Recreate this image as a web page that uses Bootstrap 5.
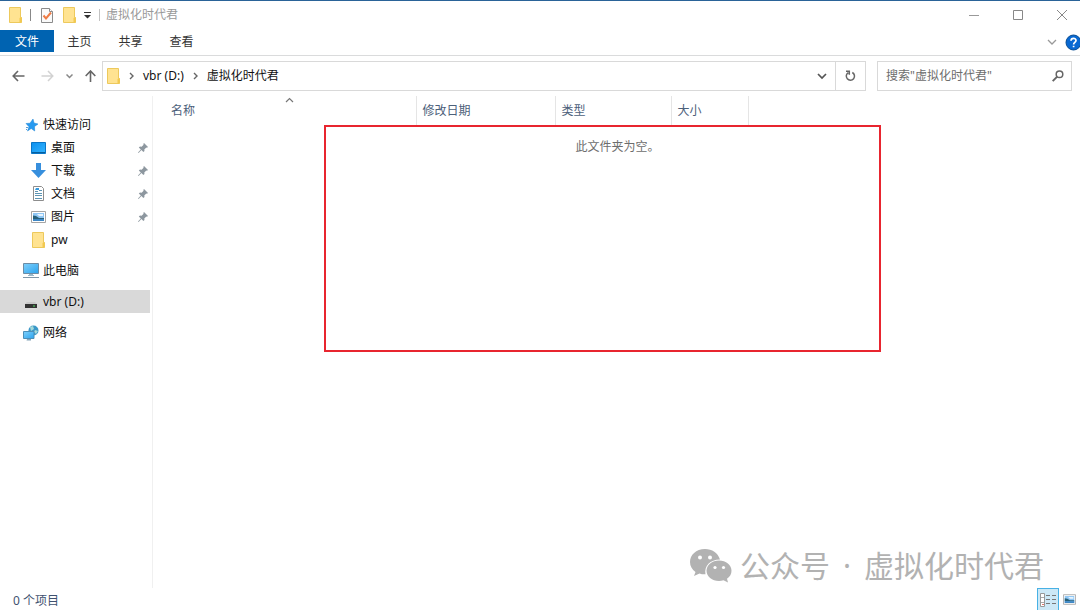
<!DOCTYPE html>
<html lang="zh-CN">
<head>
<meta charset="utf-8">
<meta name="viewport" content="width=device-width, initial-scale=1">
<title>虚拟化时代君</title>
<link href="https://cdn.jsdelivr.net/npm/bootstrap@5.3.0/dist/css/bootstrap.min.css" rel="stylesheet">
<style>
body{font-family:"Noto Sans","Noto Sans CJK SC",sans-serif;font-size:12px;line-height:20px;color:#111;background:#fff}
svg{display:block;flex:none}
button{border:0;background:none;padding:0;color:inherit}
.explorer{border-top:1px solid #2a6398;overflow-x:hidden}
.titlebar{height:28px;margin-bottom:1px;padding-left:9px}
.quick-tools{gap:8px}
.quick-tools .tool-check{padding:0 2px}
.title-text{color:#999;margin-left:6px}
.tool-sep{width:1px;height:12px;background:#888}
.win-btn{width:44px;height:28px;display:flex;align-items:center;justify-content:center}
.window-buttons{margin-right:-4px}
.ribbon{height:26px;border-bottom:1px solid #dadbdc}
.ribbon .tab-btn{height:22px;width:51px;color:#333;text-align:center;text-decoration:none;line-height:24px}
.ribbon .file-tab{width:54px;background:#0063b1;color:#fff}
.addressbar{height:40px;padding:5px 8px 5px 12px}
.path-box,.search-box{height:30px;border:1px solid #d9d9d9}
.path-box{margin-left:6px;margin-right:11px}
.path-box a{color:#111;text-decoration:none}
.crumbs{gap:9px}
.refresh{width:30px;border-left:1px solid #d9d9d9}
.search-box{width:195px;padding:0 7px 0 8px}
.search-box input{border:0;outline:0;padding:0;font-size:12px;color:#666;background:none;min-width:0}
.search-box input::placeholder{color:#6d6d6d;opacity:1}
.workspace{height:calc(100vh - 118px)}
.sidebar{width:153px;border-right:1px solid #f0f0f0;padding-top:17px}
.place{height:23px;margin-right:2px;color:#111;text-decoration:none;padding-right:2px}
.place.root{padding-left:23px;gap:4px}
.place.child{padding-left:31px;gap:5px}
.place.current{background:#d9d9d9}
.group-gap{margin-top:8px}
.files{padding-left:10px}
.file-table{table-layout:fixed;width:585px;color:#4c607a}
.file-table th{height:29px;font-weight:400;padding:0 6px;border-right:1px solid #e5e5e5;vertical-align:middle;position:relative}
.file-table th:first-child{padding-left:8px}
.sort-mark{position:absolute;top:1px;left:calc(50% - 4px)}
.empty-note{color:#6d6d6d;margin:12px 8px 0 0}
.highlight{position:absolute;left:171px;right:199px;top:29px;height:227px;border:2px solid #e8252f;pointer-events:none}
.watermark{position:absolute;right:36px;bottom:2px;gap:8px;color:#b2b2b2;font-size:30px;line-height:40px}
.wm-dot{padding:0 13px}
.statusbar{height:22px;padding-left:13px;padding-right:4px;color:#3f5270}
.view-on{width:22px;height:22px;background:#cce8f6;border:1px solid #48b1e5;border-bottom:0;display:flex;align-items:center;justify-content:center}
</style>
</head>
<body>
<svg width="0" height="0" class="position-absolute" aria-hidden="true">
<defs>
<linearGradient id="blue" x1="0" y1="0" x2="1" y2="1"><stop offset="0" stop-color="#0c90ef"/><stop offset="1" stop-color="#35b5ff"/></linearGradient>
<linearGradient id="screen" x1="0" y1="0" x2="1" y2="1"><stop offset="0" stop-color="#7fd0fb"/><stop offset="1" stop-color="#2ba3ee"/></linearGradient>
<symbol id="folder" viewBox="0 0 13 16"><path d="M.5.5h11v10h1v5H.5z" fill="#ffe391" stroke="#edc95c"/><path d="M10.500 15v-4l2-1v5.500h-2z" fill="#f3c94f"/></symbol>
<symbol id="pin" viewBox="0 0 10 10"><path d="M6 0l4 4-1 .7-.7-.3-2 2 .2 1.600-1.100 1.100-2-2L.6 10 0 9.400l2.800-2.900-2-2L2 3.500l1.600.2 2-2L5.300 1z" fill="#8d979f"/></symbol>
<symbol id="photo" viewBox="0 0 15 12"><path d="M.5.5h14v11H.5z" fill="#fff" stroke="#a5a5a5"/><path d="M2 2h11v8H2z" fill="#8fc6f4"/><path d="M2 4.500l3 .5 3 2h5v1H2z" fill="#276078"/><path d="M2 8h11v2H2z" fill="#3d86c4"/><path d="M6 3h6v2H8z" fill="#e6f4ff"/></symbol>
<symbol id="right" viewBox="0 0 5 8"><path d="M1 1l3 3-3 3" fill="none" stroke="#666" stroke-width="1.400"/></symbol>
</defs>
</svg>
<div class="explorer">
<header class="titlebar d-flex align-items-center">
  <div class="quick-tools d-flex align-items-center">
    <svg width="13" height="16"><use href="#folder"/></svg>
    <span class="tool-sep"></span>
    <button class="tool-check" aria-label="属性"><svg width="12" height="15" viewBox="0 0 12 15"><path d="M.5.5h8l3 3v11H.5z" fill="#fafafa" stroke="#8b8b8b"/><path d="M8.500.5v3h3" fill="#fff" stroke="#8b8b8b"/><path d="M2.500 7.500l2.500 3 5-6" fill="none" stroke="#ee7b45" stroke-width="2"/></svg></button>
    <button aria-label="新建文件夹"><svg width="13" height="16"><use href="#folder"/></svg></button>
    <button aria-label="自定义快速访问工具栏"><svg width="7" height="7" viewBox="0 0 7 7"><path d="M0 0h7v1H0zM0 3h7L3.500 6.500z" fill="#333"/></svg></button>
    <span class="tool-sep opacity-50"></span>
  </div>
  <span class="title-text">虚拟化时代君</span>
  <div class="window-buttons d-flex ms-auto">
    <button class="win-btn" aria-label="最小化"><svg width="10" height="10" viewBox="0 0 10 10"><path d="M0 5.500h10" stroke="#999"/></svg></button>
    <button class="win-btn" aria-label="最大化"><svg width="10" height="10" viewBox="0 0 10 10"><path d="M.5.5h9v9h-9z" fill="none" stroke="#888"/></svg></button>
    <button class="win-btn" aria-label="关闭"><svg width="10" height="10" viewBox="0 0 10 10"><path d="M0 0l10 10M10 0L0 10" stroke="#888"/></svg></button>
  </div>
</header>
<nav class="ribbon d-flex align-items-start">
  <a href="#" class="tab-btn file-tab">文件</a>
  <a href="#" class="tab-btn">主页</a>
  <a href="#" class="tab-btn">共享</a>
  <a href="#" class="tab-btn">查看</a>
  <div class="d-flex align-items-center ms-auto gap-2 mt-1">
    <button aria-label="展开功能区"><svg width="10" height="7" viewBox="0 0 10 7"><path d="M1 1l4 4 4-4" fill="none" stroke="#999" stroke-width="1.300"/></svg></button>
    <button aria-label="帮助"><svg width="15" height="17" viewBox="0 0 15 17"><circle cx="8.500" cy="8.500" r="7.500" fill="#0868d2" stroke="#084c92"/><path d="M6 6.800c0-3.300 5-3.200 5-.3 0 2-2.400 1.800-2.400 4M8.600 11.700v1.600" fill="none" stroke="#fff" stroke-width="1.700"/></svg></button>
  </div>
</nav>
<div class="addressbar d-flex align-items-center">
  <button aria-label="后退"><svg width="13" height="12" viewBox="0 0 13 12"><path d="M12.500 6H1.500M6 1L1.200 6 6 11" fill="none" stroke="#666" stroke-width="1.600"/></svg></button>
  <button class="ms-3" aria-label="前进"><svg width="13" height="12" viewBox="0 0 13 12"><path d="M.5 6h11M7 1l4.800 5L7 11" fill="none" stroke="#d2d2d2" stroke-width="1.500"/></svg></button>
  <button class="ms-2 ps-1" aria-label="最近浏览的位置"><svg width="7" height="5" viewBox="0 0 7 5"><path d="M.5.5l3 3 3-3" fill="none" stroke="#888" stroke-width="1.500"/></svg></button>
  <button class="ms-2 ps-1" aria-label="上移"><svg width="11" height="12" viewBox="0 0 11 12"><path d="M5.500 12V1.500M.7 6l4.800-5 4.800 5" fill="none" stroke="#666" stroke-width="1.600"/></svg></button>
  <div class="path-box d-flex align-items-center flex-grow-1">
    <div class="crumbs d-flex align-items-center ms-1">
      <svg width="13" height="16"><use href="#folder"/></svg>
      <svg width="5" height="8"><use href="#right"/></svg>
      <a href="#">vbr (D:)</a>
      <svg width="5" height="8"><use href="#right"/></svg>
      <a href="#">虚拟化时代君</a>
    </div>
    <button class="ms-auto me-2" aria-label="历史位置"><svg width="10" height="7" viewBox="0 0 10 7"><path d="M1 1l4 4 4-4" fill="none" stroke="#555" stroke-width="1.700"/></svg></button>
    <button class="refresh h-100 d-flex align-items-center justify-content-center" aria-label="刷新"><svg width="11" height="12" viewBox="0 0 11 12"><path d="M7.300 2.500a4.100 4.100 0 1 1-4 .1M1 1.300h3.300v3.500" fill="none" stroke="#666" stroke-width="1.500"/></svg></button>
  </div>
  <div class="search-box d-flex align-items-center">
    <input class="flex-grow-1" type="search" aria-label="搜索" placeholder='搜索"虚拟化时代君"'>
    <button aria-label="开始搜索"><svg width="12" height="12" viewBox="0 0 12 12"><circle cx="7.500" cy="4.300" r="3.300" fill="none" stroke="#666" stroke-width="1.500"/><path d="M5.200 6.700L.7 11.200" stroke="#666" stroke-width="1.900"/></svg></button>
  </div>
</div>
<div class="workspace d-flex">
  <nav class="sidebar flex-shrink-0">
    <a href="#" class="place root d-flex align-items-center"><svg width="16" height="14" viewBox="0 0 16 14"><path d="M10 1l1 4 4 1-3.500 2.500.2 4.500-3.500-2.500L4.500 13 6 8.800 3 5.500l4-.3z" fill="#279af0" stroke="#1780d2" stroke-width=".5"/><path d="M3 9.500h2M3 11.500h1" stroke="#5d9bd0"/></svg>快速访问</a>
    <a href="#" class="place child d-flex align-items-center"><svg width="15" height="12" viewBox="0 0 15 12"><path d="M.5.5h14v11H.5z" fill="url(#blue)" stroke="#0b76c6"/><path d="M1 10.500h13" stroke="#075f9e"/></svg>桌面<svg class="ms-auto" width="10" height="10"><use href="#pin"/></svg></a>
    <a href="#" class="place child d-flex align-items-center"><svg width="15" height="15" viewBox="0 0 15 15"><path d="M5 0h5v7h5l-7.500 8L0 7h5z" fill="#378fdd"/></svg>下载<svg class="ms-auto" width="10" height="10"><use href="#pin"/></svg></a>
    <a href="#" class="place child d-flex align-items-center"><svg width="15" height="15" viewBox="0 0 15 15"><path d="M2.500.5h8l2 2v12h-10z" fill="#fff" stroke="#8d8d8d"/><path d="M4 5.500h3M4 7.500h7M4 9.500h7M4 12.500h7M8 4.500h3" stroke="#5d95b4"/><path d="M5 2h3v2H4z" fill="#359ade"/></svg>文档<svg class="ms-auto" width="10" height="10"><use href="#pin"/></svg></a>
    <a href="#" class="place child d-flex align-items-center"><svg width="15" height="12"><use href="#photo"/></svg>图片<svg class="ms-auto" width="10" height="10"><use href="#pin"/></svg></a>
    <a href="#" class="place child d-flex align-items-center"><svg width="15" height="16"><use href="#folder"/></svg>pw</a>
    <a href="#" class="place root group-gap d-flex align-items-center"><svg width="16" height="15" viewBox="0 0 16 15"><path d="M.5.5h15v10H.5z" fill="url(#screen)" stroke="#6c8ca5"/><path d="M6 11h4v1h1v1H5v-1h1z" fill="#9ab7c8"/><path d="M0 14.500h16" stroke="#8097a8"/></svg>此电脑</a>
    <a href="#" class="place root group-gap current d-flex align-items-center"><svg width="16" height="14" viewBox="0 0 16 14"><path d="M4 7h8l2 2H2z" fill="#c8c8c8"/><path d="M2 9h12v4H2z" fill="#333"/><path d="M10 11h2" stroke="#50df61"/></svg>vbr (D:)</a>
    <a href="#" class="place root group-gap d-flex align-items-center"><svg width="16" height="16" viewBox="0 0 16 16"><circle cx="10.500" cy="5.500" r="5" fill="#3b98c8"/><path d="M7 2l3-1 1 3-3 2zM12 5l3 1-2 3-2-2z" fill="#a5d9d9"/><path d="M.5 6.500h10.500v7H.5z" fill="url(#screen)" stroke="#4c8fb8"/><path d="M4 14h4v1.500H3.500z" fill="#87a6ba"/></svg>网络</a>
  </nav>
  <main class="files flex-grow-1 position-relative">
    <table class="file-table">
      <colgroup><col style="width:253px"><col style="width:139px"><col style="width:116px"><col style="width:77px"></colgroup>
      <thead><tr><th scope="col">名称<svg class="sort-mark" width="9" height="6" viewBox="0 0 9 6"><path d="M1 5l3.500-3.500L8 5" fill="none" stroke="#777" stroke-width="1.200"/></svg></th><th scope="col">修改日期</th><th scope="col">类型</th><th scope="col">大小</th></tr></thead>
    </table>
    <p class="empty-note text-center">此文件夹为空。</p>
    <div class="highlight"></div>
    <div class="watermark d-flex align-items-center">
      <svg width="42" height="34" viewBox="0 0 42 34"><path d="M15 0C6 0 0 6 0 13c0 4 2 7.500 5.500 10L4 27l5.500-2.500c2 .7 4 1 6 .8C14 17 20 10.500 30 10.500 28 4 22 0 15 0z" fill="#b2b2b2"/><path d="M29 11.500c-7 0-12.500 4.500-12.500 10.300S22 32 29 32c1.500 0 3-.2 4.500-.7L38 33.500l-1-3.700c3-2 4.500-4.800 4.500-8C41.500 16 36 11.500 29 11.500z" fill="#b2b2b2"/><circle cx="10" cy="8.500" r="2" fill="#fff"/><circle cx="20" cy="8.500" r="2" fill="#fff"/><circle cx="25" cy="18.500" r="1.600" fill="#fff"/><circle cx="33.500" cy="18.500" r="1.600" fill="#fff"/></svg>
      <span class="d-flex"><span>公众号</span><span class="wm-dot">·</span><span>虚拟化时代君</span></span>
    </div>
  </main>
</div>
<footer class="statusbar d-flex align-items-center">
  <span class="pt-1">0 个项目</span>
  <button class="view-on ms-auto me-1" aria-label="详细信息"><svg width="16" height="14" viewBox="0 0 16 14"><path d="M.5.5h4v13h-4z" fill="#fff" stroke="#999"/><path d="M1 4.500h3M1 9.500h3" stroke="#aaa"/><path d="M2 11.500h2" stroke="#e0776e"/><path d="M6 2.500h4M6 6.500h4M6 10.500h4M12 2.500h4M12 6.500h4M12 10.500h4" stroke="#777"/></svg></button>
  <button aria-label="大图标"><svg width="13" height="11"><use href="#photo"/></svg></button>
</footer>
</div>
<script src="https://cdn.jsdelivr.net/npm/bootstrap@5.3.0/dist/js/bootstrap.bundle.min.js"></script>
</body>
</html>
